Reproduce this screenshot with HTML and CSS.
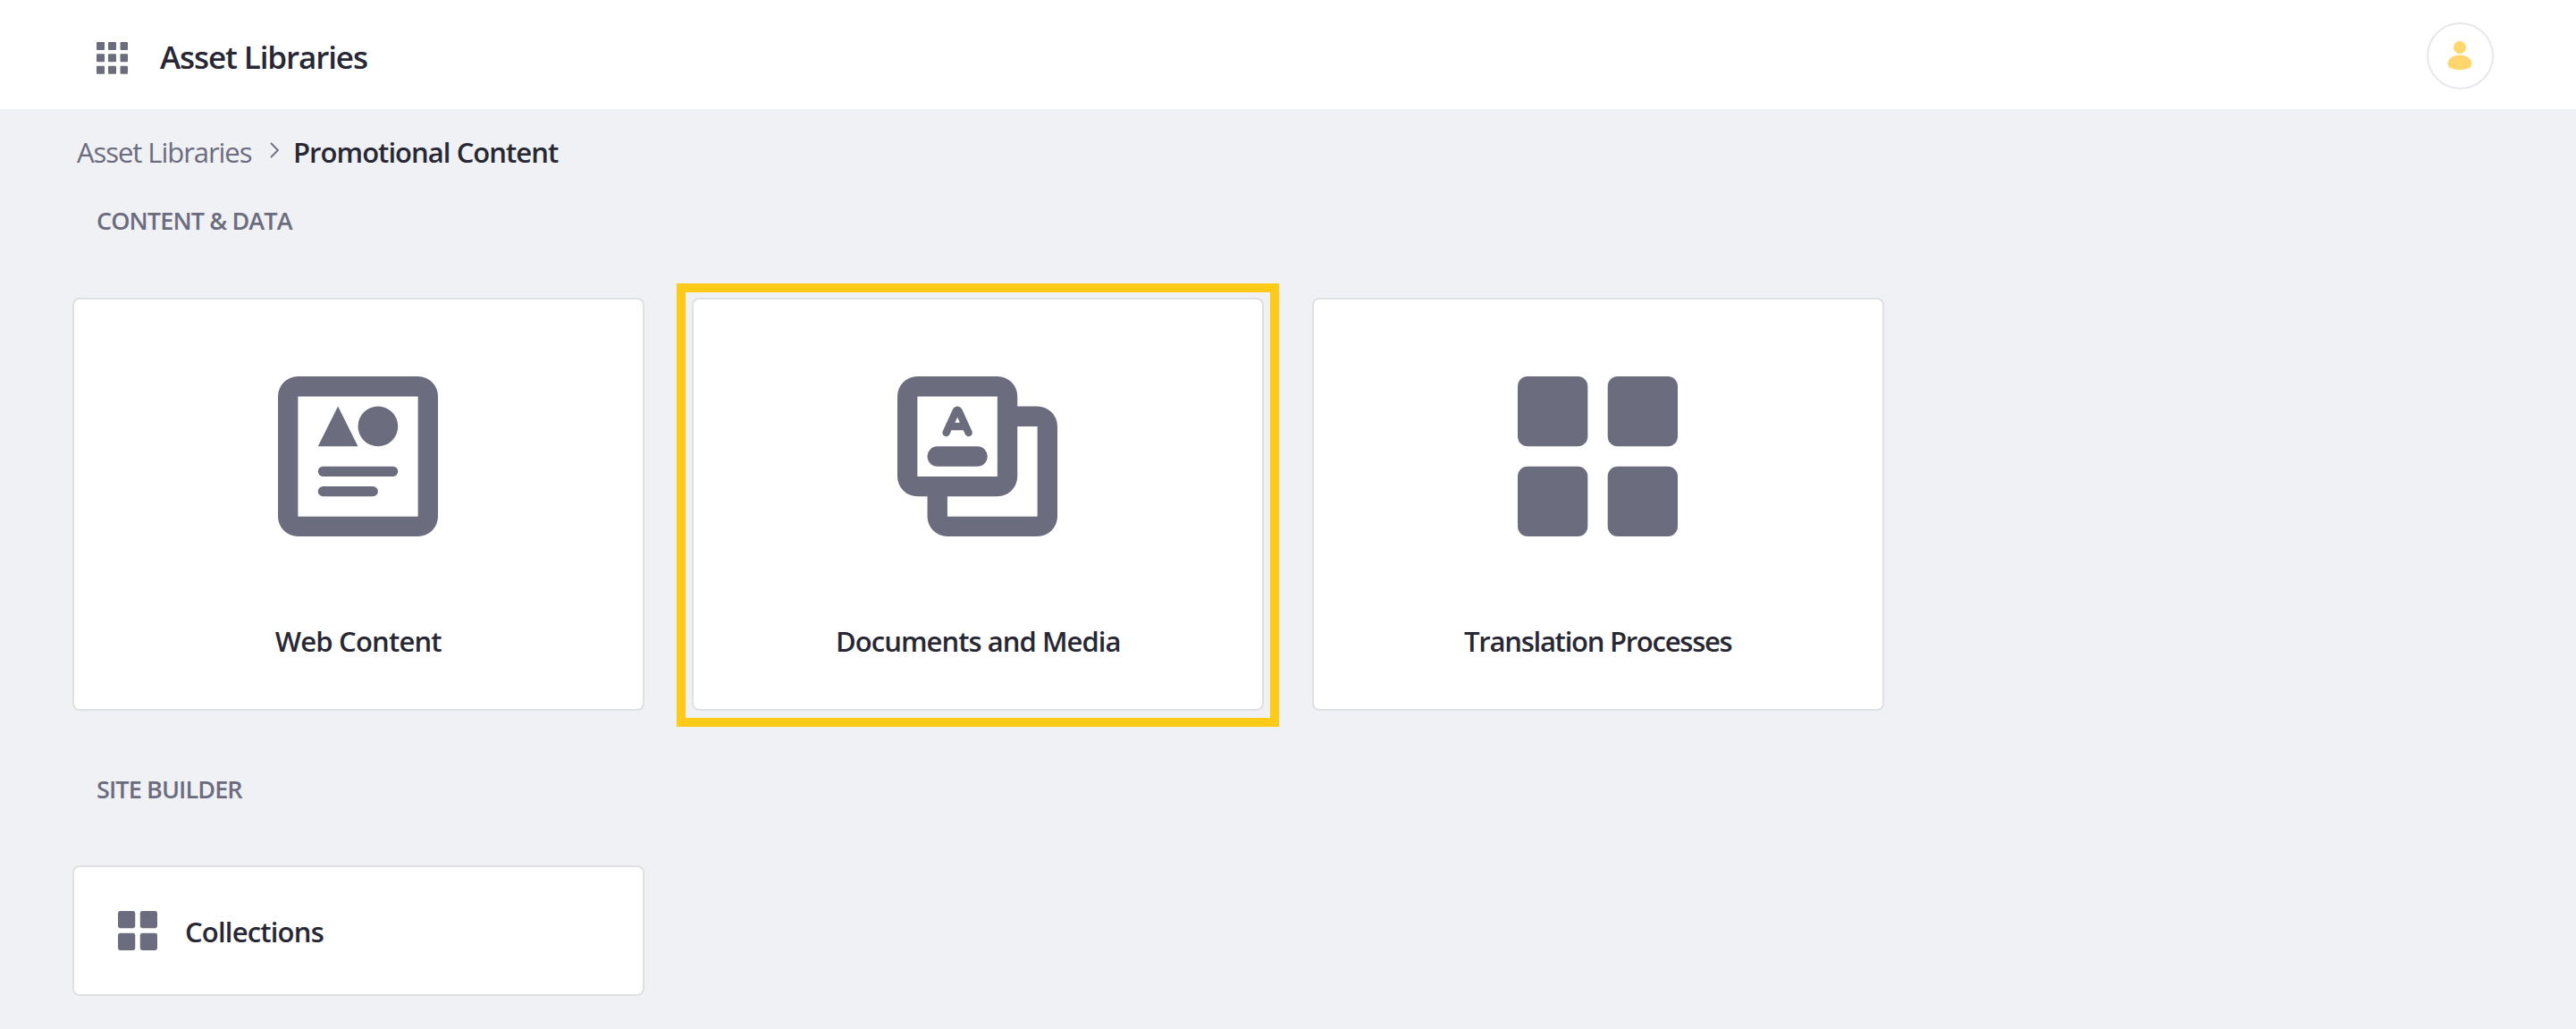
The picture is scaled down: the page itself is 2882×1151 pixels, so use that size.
FILE: index.html
```html
<!DOCTYPE html>
<html lang="en">
<head>
<meta charset="utf-8">
<title>Asset Libraries</title>
<link rel="stylesheet" href="styles.css">
</head>
<body>
<header class="topbar">
  <svg class="apps-icon" viewBox="0 0 35 36" aria-hidden="true">
    <rect x="0" y="0" width="9" height="9" rx="1"/><rect x="13" y="0" width="9" height="9" rx="1"/><rect x="26.500" y="0" width="8.500" height="9" rx="1"/>
    <rect x="0" y="13.300" width="9" height="9" rx="1"/><rect x="13" y="13.300" width="9" height="9" rx="1"/><rect x="26.500" y="13.300" width="8.500" height="9" rx="1"/>
    <rect x="0" y="26.700" width="9" height="9" rx="1"/><rect x="13" y="26.700" width="9" height="9" rx="1"/><rect x="26.500" y="26.700" width="8.500" height="9" rx="1"/>
  </svg>
  <h1 class="title">Asset Libraries</h1>
  <button class="avatar" aria-label="User menu">
    <svg class="user-icon" viewBox="0 0 28 32" aria-hidden="true"><circle cx="14" cy="7" r="7"/><path d="M14 15.500C22 15.500 27.500 20 27.500 25.500C27.500 29.500 22.500 32 14 32S.5 29.500.5 25.500C.5 20 6 15.500 14 15.500Z"/></svg>
  </button>
</header>
<main class="content">
  <nav class="breadcrumb">
    <a class="crumb">Asset Libraries</a>
    <svg class="chevron" viewBox="0 0 10 18" aria-hidden="true"><path d="M1 1L9 9L1 17"/></svg>
    <span class="crumb crumb-current">Promotional Content</span>
  </nav>
  <h2 class="section-title section-content">Content &amp; Data</h2>
  <div class="cards">
    <a class="card">
      <svg class="card-icon" viewBox="0 0 16 16" aria-hidden="true">
        <path fill-rule="evenodd" d="M2 0h12a2 2 0 0 1 2 2v12a2 2 0 0 1-2 2H2a2 2 0 0 1-2-2V2a2 2 0 0 1 2-2zM2 2v12h12V2z"/>
        <path d="M6 3L8 7H4z"/><circle cx="10" cy="5" r="2"/>
        <rect x="4" y="9" width="8" height="1" rx=".5"/><rect x="4" y="11" width="6" height="1" rx=".5"/>
      </svg>
      <span class="card-label">Web Content</span>
    </a>
    <a class="card card-highlight">
      <svg class="card-icon" viewBox="0 0 16 16" aria-hidden="true">
        <path fill-rule="evenodd" d="M2 0h8a2 2 0 0 1 2 2v1h2a2 2 0 0 1 2 2v9a2 2 0 0 1-2 2H5a2 2 0 0 1-2-2v-2H2a2 2 0 0 1-2-2V2a2 2 0 0 1 2-2zM2 2v8h8V2zM12 5v5a2 2 0 0 1-2 2H5v2h9V5z"/>
        <path class="mark" d="M4.880 5.630L5.850 3.500Q6 3.240 6.150 3.500L7.120 5.630M5.250 5H6.750"/>
        <rect x="3" y="7" width="6" height="2" rx="1"/>
      </svg>
      <span class="card-label label-docs">Documents and Media</span>
    </a>
    <a class="card">
      <svg class="card-icon" viewBox="0 0 16 16" aria-hidden="true">
        <rect width="7" height="7" rx="1"/><rect x="9" width="7" height="7" rx="1"/><rect y="9" width="7" height="7" rx="1"/><rect x="9" y="9" width="7" height="7" rx="1"/>
      </svg>
      <span class="card-label label-trans">Translation Processes</span>
    </a>
  </div>
  <h2 class="section-title section-builder">Site Builder</h2>
  <div class="cards">
    <a class="card card-row">
      <svg class="row-icon" viewBox="0 0 16 16" aria-hidden="true">
        <rect width="7" height="7" rx=".9"/><rect x="9" width="7" height="7" rx=".9"/><rect y="9" width="7" height="7" rx=".9"/><rect x="9" y="9" width="7" height="7" rx=".9"/>
      </svg>
      <span class="card-label">Collections</span>
    </a>
  </div>
</main>
</body>
</html>
```
FILE: styles.css
```css
* { box-sizing: border-box; }
body { margin: 0; min-height: 1151px; background: #f0f1f5; color: #272833; font-family: "Open Sans", "Noto Sans", sans-serif; }
svg { display: block; flex: none; fill: #6b6c7e; }
h1, h2 { margin: 0; }

.topbar { display: flex; align-items: center; height: 122px; padding: 3px 92px 0 108px; background: #fff; }
.apps-icon { width: 35px; height: 36px; margin-top: 5px; }
.title { margin: 3px 0 0 36px; font-size: 35px; line-height: 48px; font-weight: 600; white-space: nowrap; letter-spacing: -1.1px; }
.avatar { display: flex; justify-content: center; width: 75px; height: 75px; margin-left: auto; padding: 19px 1px 0 0; border: 2px solid #e7e7ed; border-radius: 50%; background: #fff; }
.user-icon { width: 28px; height: 32px; fill: #ffd76e; }

.content { padding: 26px 0 0 81px; }
.breadcrumb { display: flex; align-items: center; height: 44px; padding-left: 5px; }
.crumb { width: 243px; font-size: 31px; line-height: 44px; color: #6b6c7e; white-space: nowrap; letter-spacing: -1.05px; }
.crumb-current { width: auto; color: #272833; font-weight: 600; letter-spacing: -0.95px; }
.chevron { width: 10px; height: 18px; margin: -4px 16px 0 -27px; fill: none; stroke: #6b6c7e; stroke-width: 1.8; }

.section-title { padding-left: 27px; font-size: 27px; line-height: 38px; font-weight: 600; color: #6b6c7e; text-transform: uppercase; white-space: nowrap; letter-spacing: -0.88px; }
.section-content { margin: 36px 0 67px; }
.section-builder { margin: 69px 0 66px; }

.cards { display: grid; grid-template-columns: repeat(3, 639.6px); column-gap: 53.9px; }
.card { position: relative; display: flex; flex-direction: column; align-items: center; height: 462px; padding-top: 86px; border: 2px solid #dfe0e1; border-radius: 8px; background: #fff; }
.card-highlight::after { content: ""; position: absolute; inset: -18px -19px -20px -19px; border: 10px solid #ffca18; }
.card-icon { width: 179px; height: 179px; margin-right: 1px; }
.mark { fill: none; stroke: #6b6c7e; stroke-width: .75; stroke-linecap: round; stroke-linejoin: round; }
.card-label { margin-top: 95px; font-size: 31px; line-height: 44px; font-weight: 600; white-space: nowrap; letter-spacing: -0.8px; }
.label-docs { letter-spacing: -0.95px; }
.label-trans { letter-spacing: -1.25px; }
.card-row { flex-direction: row; height: 146px; padding: 0 0 0 49px; }
.row-icon { width: 44px; height: 44px; }
.card-row .card-label { margin: 2px 0 0 31px; }
```
